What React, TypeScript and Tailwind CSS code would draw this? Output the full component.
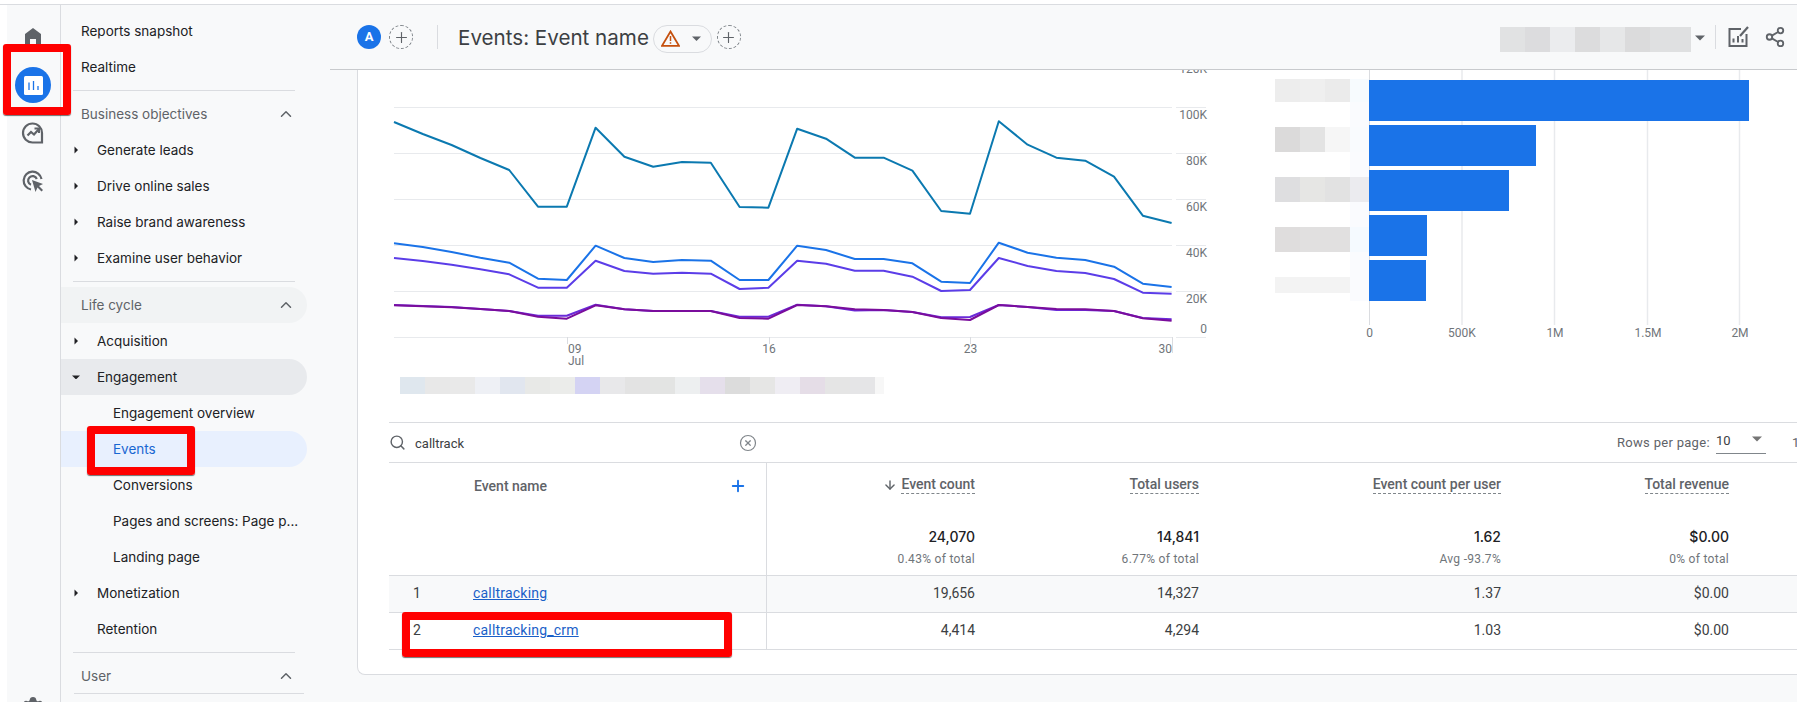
import React from 'react';
import { ChevronUp, CircleX, Plus, Search, Settings, Share2, ArrowDown } from 'lucide-react';

const stepX = 28.8;
const px = (i: number) => 394 + stepX * i;
const toPoints = (ys: number[]) => ys.map((y, i) => `${px(i).toFixed(1)},${y}`).join(' ');

const series = [
  { color: '#0b79b0', ys: [122, 134, 145, 158, 170, 206.7, 206.7, 127.7, 156.7, 166.7, 162, 162.7, 207, 207.7, 128.7, 138.7, 157.7, 157.7, 170.7, 211, 213.7, 121.3, 144.7, 157.7, 160.7, 176.7, 215.7, 223] },
  { color: '#1a73e8', ys: [243.3, 247, 252, 257.7, 262.7, 278.7, 280, 245.7, 258, 262, 260, 260.7, 280, 280, 245.7, 250, 259, 259, 263.3, 281.7, 283, 242.7, 252.7, 257.7, 260, 266.7, 283.7, 287] },
  { color: '#5b3de8', ys: [258, 261, 264.7, 269.3, 274.3, 287.7, 287.7, 260.7, 271, 273.7, 272.7, 273.7, 289, 287.7, 260.7, 263.7, 270.7, 270.7, 276.7, 291, 290, 258, 266, 271, 273, 279, 292.7, 293.7] },
  { color: '#6a2bd9', ys: [305, 306, 307, 309, 311, 315.7, 315.7, 304.7, 309.3, 311, 311, 311, 316.7, 316.7, 304.7, 306.3, 310.5, 310, 312, 317.3, 317, 305, 307, 310, 310, 311, 318, 319.3] },
  { color: '#7a0d9c', ys: [305.3, 306.3, 307.3, 309, 311, 316.7, 318.7, 305.3, 309.3, 311, 311, 311, 318, 318.7, 305, 306.3, 309.3, 310, 312, 318, 320, 305, 307, 309, 309.3, 311, 318.3, 320.7] },
];

const gridYs = [107.5, 153.5, 199.5, 245.5, 291.5, 337.5];
const axisLabels = [
  { t: '120K', y: 73 },
  { t: '100K', y: 118.5 },
  { t: '80K', y: 164.5 },
  { t: '60K', y: 210.5 },
  { t: '40K', y: 256.5 },
  { t: '20K', y: 302.5 },
  { t: '0', y: 333 },
];

const legendColors = [
  'bg-[#dfe7ee]', 'bg-[#e8e8e8]', 'bg-[#e9e9e9]', 'bg-[#eef0f5]', 'bg-[#e1e6ef]', 'bg-[#e8e9e7]', 'bg-[#ebecea]',
  'bg-[#d4d3f3]', 'bg-[#e8e8ea]', 'bg-[#e3e3e3]', 'bg-[#e3e4e3]', 'bg-[#edeff0]', 'bg-[#e5dfeb]', 'bg-[#dcdcdc]',
  'bg-[#e6e6e5]', 'bg-[#efedf3]', 'bg-[#e5dde7]', 'bg-[#e5e5e5]', 'bg-[#e5e5e7]',
];

const headerBlocks = [
  'w-[25px] bg-[#e1e2e3]', 'w-[25px] bg-[#dcdcde]', 'w-[25px] bg-[#ebecee]', 'w-[25px] bg-[#dcdcdd]',
  'w-[25px] bg-[#e6e7e8]', 'w-[25px] bg-[#dbdbdc]', 'w-[41px] bg-[#dfe0e1]',
];

const bars = [
  { y: 80, right: 1749, label: ['#ededed', '#efefef', '#ebebeb', '#f7fbfe'], ly: 79, lh: 23 },
  { y: 125, right: 1536, label: ['#dbdada', '#e3e3e3', '#f6f6f6', '#f9fbfe'], ly: 127, lh: 25 },
  { y: 170, right: 1509, label: ['#dedee0', '#e6e6e4', '#e2e2e2', '#ebebef'], ly: 177, lh: 25 },
  { y: 215, right: 1427, label: ['#dfdddd', '#e1e0e0', '#e1e0e0', '#f5faff'], ly: 227, lh: 25 },
  { y: 260, right: 1426, label: ['#f3f3f3', '#f3f3f3', '#f3f3f3', '#fafbfe'], ly: 277, lh: 16 },
];

const Caret = () => (
  <svg width="6" height="10" viewBox="0 0 6 10" className="shrink-0">
    <path d="M1.500 1.500l3.500 3.500-3.500 3.500z" fill="#202124" />
  </svg>
);

const CaretDown = ({ color = '#202124', size = 10 }: { color?: string; size?: number }) => (
  <svg width={size} height={size * 0.6} viewBox="0 0 10 6" className="shrink-0">
    <path d="M0 0.500h10L5 5.500z" fill={color} />
  </svg>
);

const Divider = ({ className = 'ml-[12px] w-[222px]' }: { className?: string }) => (
  <div className={`h-px bg-[#dadce0] my-[5px] ${className}`} />
);

const Heading = ({ label, pill }: { label: string; pill?: boolean }) => (
  <div className={`flex h-9 w-[246px] items-center justify-between rounded-r-full pl-[20px] pr-[12px] text-[#5f6368] ${pill ? 'bg-[#f1f3f4]' : ''}`}>
    <span>{label}</span>
    <ChevronUp size={18} strokeWidth={2} className="text-[#5f6368]" />
  </div>
);

const Row = ({ label, caret, open }: { label: string; caret?: boolean; open?: boolean }) => (
  <div className={`flex h-9 w-[246px] items-center rounded-r-full text-[#202124] ${open ? 'bg-[#e8eaed]' : ''}`}>
    <span className="flex w-[36px] shrink-0 justify-center pr-[6px]">
      {open ? <CaretDown size={8} /> : caret ? <Caret /> : null}
    </span>
    <span>{label}</span>
  </div>
);

const SubRow = ({ label, active }: { label: string; active?: boolean }) => (
  <div className={`flex h-9 w-[246px] items-center rounded-r-full pl-[52px] ${active ? 'bg-[#e8f0fe] text-[#1967d2]' : 'text-[#202124]'}`}>
    {label}
  </div>
);

const Sidebar = () => (
  <nav className="flex w-[269px] shrink-0 flex-col pt-[8px] font-['Inter',sans-serif] text-[13.5px] bg-[#f8f9fa]">
    <div className="flex h-9 items-center pl-[20px] text-[#202124]">Reports snapshot</div>
    <div className="flex h-9 items-center pl-[20px] text-[#202124]">Realtime</div>
    <Divider />
    <Heading label="Business objectives" />
    <Row label="Generate leads" caret />
    <Row label="Drive online sales" caret />
    <Row label="Raise brand awareness" caret />
    <Row label="Examine user behavior" caret />
    <Divider />
    <Heading label="Life cycle" pill />
    <Row label="Acquisition" caret />
    <Row label="Engagement" open />
    <SubRow label="Engagement overview" />
    <SubRow label="Events" active />
    <SubRow label="Conversions" />
    <SubRow label="Pages and screens: Page p..." />
    <SubRow label="Landing page" />
    <Row label="Monetization" caret />
    <Row label="Retention" />
    <Divider />
    <div className="-mb-px"><Heading label="User" /></div>
    <div className="ml-[13px] h-px w-[230px] bg-[#dadce0]" />
  </nav>
);

const Rail = () => (
  <aside className="flex w-[54px] shrink-0 flex-col items-center border-r border-[#dadce0] bg-[#f8f9fa] pr-px pt-[8px]">
    <div className="flex h-12 shrink-0 items-center justify-center">
      <svg width="24" height="24" viewBox="0 0 24 24"><path d="M4 21V9l8-6 8 6v12h-5v-7H9v7z" fill="#5f6368" /></svg>
    </div>
    <div className="flex h-12 shrink-0 items-center justify-center">
      <div className="flex h-9 w-9 items-center justify-center rounded-full bg-[#1a73e8]">
        <svg width="19" height="19" viewBox="0 0 19 19">
          <rect width="19" height="19" rx="1.500" fill="#fff" />
          <path d="M5 6.500v7.500M9.500 5v9M14 10v4" stroke="#1a73e8" strokeWidth="1.300" />
        </svg>
      </div>
    </div>
    <div className="flex h-12 shrink-0 items-center justify-center">
      <svg width="24" height="24" viewBox="0 0 24 24" fill="none" stroke="#5f6368">
        <path d="M21 12a9.500 9.500 0 1 0-9.500 9.500H21z" strokeWidth="2.200" />
        <path d="M6.500 14.500l3.500-3.500 3 2.500 4.500-5" strokeWidth="2.200" />
        <path d="M13.500 7.500H18V12" strokeWidth="2" />
      </svg>
    </div>
    <div className="flex h-12 shrink-0 items-center justify-center">
      <svg width="24" height="24" viewBox="0 0 24 24" fill="none">
        <path d="M20.500 10A9 9 0 1 0 10 20.500" stroke="#5f6368" strokeWidth="2.200" />
        <path d="M15.800 10A4.500 4.500 0 1 0 10 15.800" stroke="#5f6368" strokeWidth="2.200" />
        <path d="M11 11l11 4-4 2 4 4-1.500 1.500-4-4-2 4.500z" fill="#5f6368" />
      </svg>
    </div>
    <div className="mt-[479px] flex h-12 shrink-0 items-center justify-center">
      <Settings size={24} fill="#5f6368" className="text-[#5f6368]" />
    </div>
  </aside>
);

const DashedPlus = () => (
  <span className="flex h-6 w-6 items-center justify-center rounded-full border border-dashed border-[#80868b]">
    <Plus size={17} strokeWidth={1.600} className="text-[#5f6368]" />
  </span>
);

const TopBar = () => (
  <header className="flex h-[65px] shrink-0 items-center border-b border-[#c8cacd] bg-[#f8f9fa] pl-[27px]">
    <span className="flex h-6 w-6 items-center justify-center rounded-full bg-[#1a73e8] font-['Roboto',sans-serif] text-[13px] font-bold text-white">A</span>
    <span className="ml-[8px]"><DashedPlus /></span>
    <span className="ml-[24px] h-6 w-px bg-[#dadce0]" />
    <h1 className="ml-[20px] mt-[3px] font-['Inter',sans-serif] text-[20.6px] font-normal text-[#3c4043]">Events: Event name</h1>
    <span className="ml-[4px] mt-[3px] flex h-[28px] w-[59px] items-center rounded-full border border-[#dadce0] pl-[7px]">
      <svg width="19" height="17" viewBox="0 0 19 17" fill="none">
        <path d="M9.500 1.500L18 15.800H1z" stroke="#c5500e" strokeWidth="1.800" />
        <path d="M9.500 6v5M9.500 12.200v1.600" stroke="#c5500e" strokeWidth="1.500" />
      </svg>
      <span className="ml-[12px]"><CaretDown color="#5f6368" size={9} /></span>
    </span>
    <span className="ml-[5px]"><DashedPlus /></span>
    <div className="ml-[759px] mt-[4px] flex h-[25px]">
      {headerBlocks.map((c, i) => (
        <span key={i} className={`h-full ${c}`} />
      ))}
    </div>
    <span className="ml-[4px] mt-[2px]"><CaretDown color="#5f6368" /></span>
    <span className="ml-[10px] h-6 w-px bg-[#dadce0]" />
    <svg width="24" height="24" viewBox="0 0 24 24" fill="none" className="ml-[10px]" stroke="#5f6368">
      <path d="M15 4H3.500v17h17V9" strokeWidth="2" />
      <path d="M7.500 17.500v-4M12 17.500v-6.500M16.500 17.500V14" strokeWidth="2" />
      <path d="M14 11l8-9" strokeWidth="2.200" />
    </svg>
    <Share2 size={22} strokeWidth={2} className="ml-[14px] text-[#5f6368]" />
  </header>
);

const LineChart = () => (
  <svg width="882" height="300" viewBox="358 70 882 300" className="block">
    {gridYs.map(y => (
      <g key={y}>
        <line x1="394" x2="1172" y1={y} y2={y} stroke="#e8eaed" />
        <line x1="1176" x2="1206" y1={y} y2={y} stroke="#e8eaed" />
      </g>
    ))}
    {series.map(s => (
      <polyline key={s.color} points={toPoints(s.ys)} fill="none" stroke={s.color} strokeWidth="2" strokeLinejoin="round" />
    ))}
    <path d="M567.500 337v7M769.500 337v7M970.500 337v7M1172.500 337v16" stroke="#dadce0" />
    <g fontFamily="Roboto, sans-serif" fontSize="12" fill="#70757a">
      {axisLabels.map(l => (
        <text key={l.t} x="1207" y={l.y} textAnchor="end">{l.t}</text>
      ))}
      <text x="568" y="353">09</text>
      <text x="568" y="365">Jul</text>
      <text x="769" y="353" textAnchor="middle">16</text>
      <text x="970.500" y="353" textAnchor="middle">23</text>
      <text x="1172" y="353" textAnchor="end">30</text>
    </g>
  </svg>
);

const BarChart = () => (
  <svg width="557" height="275" viewBox="1240 70 557 275" className="block">
    {[1462, 1554.500, 1647.500, 1739.500].map(x => (
      <line key={x} x1={x} x2={x} y1="70" y2="325" stroke="#e8eaed" strokeWidth="1.500" />
    ))}
    <line x1="1369.500" x2="1369.500" y1="70" y2="325" stroke="#dadce0" />
    <rect x="1350" y="79" width="19" height="222" fill="#fafbfe" />
    {bars.map(b => (
      <g key={b.y}>
        {b.label.map((c, i) => (
          <rect key={i} x={1275 + 25 * i} y={b.ly} width={i === 3 ? 19 : 25} height={b.lh} fill={c} />
        ))}
        <rect x="1369" y={b.y} width={b.right - 1369} height="41" fill="#1a73e8" />
      </g>
    ))}
    <g fontFamily="Roboto, sans-serif" fontSize="12" fill="#70757a" textAnchor="middle">
      <text x="1369.500" y="337">0</text>
      <text x="1462" y="337">500K</text>
      <text x="1555" y="337">1M</text>
      <text x="1648" y="337">1.5M</text>
      <text x="1740" y="337">2M</text>
    </g>
  </svg>
);

const tableCols = 'grid grid-cols-[378px_208px_224px_302px_228px_1fr]';

const Metric = ({ title, total, sub, sort }: { title: string; total: string; sub: string; sort?: boolean }) => (
  <div className="flex flex-col items-end pt-[12px]">
    <div className="flex items-center">
      {sort && <ArrowDown size={14} strokeWidth={2.400} className="mr-[4px] text-[#5f6368]" />}
      <span className="border-b border-dashed border-[#80868b] text-[14px] font-medium leading-[18px] text-[#5f6368]">{title}</span>
    </div>
    <div className="mt-[33px] font-['Inter',sans-serif] text-[14px] font-medium leading-5 text-[#202124]">{total}</div>
    <div className="mt-[4px] text-[12px] leading-4 tracking-[0.3px] text-[#70757a]">{sub}</div>
  </div>
);

const DataRow = ({ n, name, vals, shaded }: { n: string; name: string; vals: string[]; shaded?: boolean }) => (
  <div className={`${tableCols} h-[37px] border-b border-[#dadce0] ${shaded ? 'bg-[#f8f9fa]' : ''}`}>
    <div className="flex items-center border-r border-[#dadce0] pb-px">
      <span className="w-[84px] pl-[24px] text-[#3c4043]">{n}</span>
      <a className="tracking-[0.2px] text-[#1a5fc8] underline">{name}</a>
    </div>
    {vals.map((v, i) => (
      <div key={i} className="flex items-center justify-end pb-px text-[#3c4043]">{v}</div>
    ))}
  </div>
);

const EventsTable = () => (
  <section className="ml-[31px] font-['Roboto',sans-serif] text-[14px]">
    <div className="flex h-[41px] items-center whitespace-nowrap border-y border-[#dadce0]">
      <Search size={17} strokeWidth={2} className="shrink-0 text-[#5f6368]" />
      <span className="ml-[9px] w-[49px] pt-[2px] text-[13px] text-[#3c4043]">calltrack</span>
      <CircleX size={18} strokeWidth={1.600} className="ml-[275px] shrink-0 text-[#80868b]" />
      <span className="ml-[860px] w-[91px] shrink-0 text-[13px] tracking-[0.3px] text-[#5f6368]">Rows per page:</span>
      <div className="ml-[8px] flex h-[23px] w-[50px] shrink-0 items-start justify-between border-b border-[#80868b] pr-[4px] text-[13px] text-[#3c4043]">
        <span>10</span>
        <span className="mt-[5px]"><CaretDown color="#757575" /></span>
      </div>
      <span className="ml-[26px] text-[13px] text-[#5f6368]">1</span>
    </div>
    <div className={`${tableCols} h-[113px] border-b border-[#dadce0]`}>
      <div className="flex items-start justify-between border-r border-[#dadce0] pl-[85px] pr-[19px] pt-[14px]">
        <span className="font-medium leading-[18px] text-[#5f6368]">Event name</span>
        <Plus size={18} strokeWidth={2.500} className="text-[#1a73e8]" />
      </div>
      <Metric title="Event count" total="24,070" sub="0.43% of total" sort />
      <Metric title="Total users" total="14,841" sub="6.77% of total" />
      <Metric title="Event count per user" total="1.62" sub="Avg -93.7%" />
      <Metric title="Total revenue" total="$0.00" sub="0% of total" />
    </div>
    <DataRow n="1" name="calltracking" vals={['19,656', '14,327', '1.37', '$0.00']} shaded />
    <DataRow n="2" name="calltracking_crm" vals={['4,414', '4,294', '1.03', '$0.00']} />
  </section>
);

const Highlight = ({ className }: { className: string }) => (
  <div className={`absolute rounded-[3px] border-8 border-[#ff0000] shadow-[0_1px_1px_rgba(0,0,0,0.55)] ${className}`} />
);

export default function App() {
  return (
    <div className="relative flex h-[702px] w-[1797px] flex-col overflow-hidden bg-white">
      <div className="h-[4px] shrink-0 bg-white" />
      <div className="h-px shrink-0 bg-[#dadce0]" />
      <div className="flex min-h-0 flex-1 pl-[7px]">
        <Rail />
        <Sidebar />
        <main className="flex min-w-0 flex-1 flex-col bg-[#f8f9fa]">
          <TopBar />
          <div className="ml-[27px] rounded-bl-[8px] border-b border-l border-[#dadce0] bg-white pb-[24px]">
            <div className="flex h-[352px]">
              <div className="w-[882px] shrink-0">
                <LineChart />
                <div className="ml-[42px] mt-[7px] flex h-[17px]">
                  {legendColors.map((c, i) => (
                    <span key={i} className={`h-full w-[25px] ${c}`} />
                  ))}
                  <span className="h-full w-[9px] bg-[#f7f7f7]" />
                </div>
              </div>
              <BarChart />
            </div>
            <EventsTable />
          </div>
        </main>
      </div>
      <Highlight className="left-[3px] top-[44px] h-[71px] w-[68px]" />
      <Highlight className="left-[87px] top-[426px] h-[49px] w-[108px]" />
      <Highlight className="left-[402px] top-[612px] h-[45px] w-[330px]" />
    </div>
  );
}
